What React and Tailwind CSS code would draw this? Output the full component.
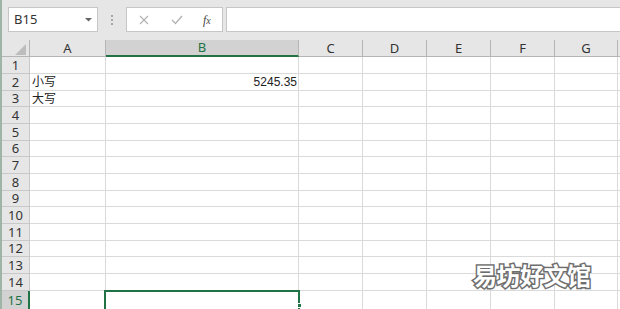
import React from "react";

const cols = [
  { n: "A", w: 76 },
  { n: "B", w: 193 },
  { n: "C", w: 64 },
  { n: "D", w: 64 },
  { n: "E", w: 64 },
  { n: "F", w: 64 },
  { n: "G", w: 63 },
];
const heights = [17, 17, 16, 17, 17, 16, 17, 17, 16, 17, 17, 16, 17, 17, 20];

export default function App() {
  return (
    <div className="w-[620px] h-[309px] overflow-hidden bg-[#e6e6e6] flex relative" style={{ fontFamily: '"Noto Sans","Noto Sans CJK SC",sans-serif' }}>
      <div className="w-[2px] shrink-0 bg-[#9fb4a6]" />
      <div className="flex-1 flex flex-col min-w-0">
        {/* toolbar */}
        <div className="h-[40px] shrink-0 flex items-start pt-[7px]">
          <div className="ml-[6px] w-[90px] h-[25px] bg-white border border-[#c6c6c6] flex items-center justify-between pl-[5px] pr-[5px]">
            <span className="text-[13px] text-[#333] leading-none">B15</span>
            <svg width="7" height="4" viewBox="0 0 7 4"><path d="M0 0H7L3.5 3.5Z" fill="#666" /></svg>
          </div>
          <div className="w-[28px] h-[25px] flex flex-col items-center justify-center gap-[2px]">
            <span className="w-[2px] h-[2px] bg-[#a8a8a8]" />
            <span className="w-[2px] h-[2px] bg-[#a8a8a8]" />
            <span className="w-[2px] h-[2px] bg-[#a8a8a8]" />
          </div>
          <div className="w-[97px] h-[25px] bg-white border border-[#c6c6c6] flex items-center">
            <svg className="ml-[12px]" width="10" height="10" viewBox="0 0 10 10"><path d="M1 1L9 9M9 1L1 9" stroke="#b3b3b3" strokeWidth="1.2" /></svg>
            <svg className="ml-[22px]" width="12" height="10" viewBox="0 0 12 10"><path d="M1 5L4.5 8.5L11 1" stroke="#b3b3b3" strokeWidth="1.4" fill="none" /></svg>
            <span className="ml-[20px] text-[12px] italic text-[#444] leading-none" style={{ fontFamily: '"Liberation Serif",serif' }}>f<span className="text-[10px]">x</span></span>
          </div>
          <div className="ml-[3px] flex-1 h-[25px] bg-white border border-[#c6c6c6] border-r-0" />
        </div>
        {/* column header */}
        <div className="h-[17px] shrink-0 flex text-[13px] text-[#333] leading-none">
          <div className="w-[28px] shrink-0 border-r border-b border-[#b5b5b5] relative">
            <svg className="absolute left-[13px] top-[4px]" width="11" height="11" viewBox="0 0 11 11"><path d="M11 0V11H0Z" fill="#bdbdbd" /></svg>
          </div>
          {cols.map((c) => (
            <div
              key={c.n}
              style={{ width: c.w }}
              className={
                c.n === "B"
                  ? "shrink-0 flex items-center justify-center border-r border-[#b5b5b5] border-b-2 border-b-[#217346] bg-[#d2d2d2] text-[#217346]"
                  : "shrink-0 flex items-center justify-center border-r border-b border-[#b5b5b5]"
              }
            >
              {c.n}
            </div>
          ))}
          <div className="flex-1 border-b border-[#b5b5b5]" />
        </div>
        {/* rows */}
        {heights.map((h, i) => {
          const r = i + 1;
          const sel = r === 15;
          return (
            <div key={r} style={{ height: h }} className="shrink-0 flex relative">
              <div
                className={
                  sel
                    ? "w-[28px] shrink-0 flex items-center justify-center text-[13px] leading-none bg-[#d2d2d2] text-[#217346] border-r-2 border-r-[#217346] border-b border-b-[#c8c8c8]"
                    : "w-[28px] shrink-0 flex items-center justify-center text-[13px] leading-none text-[#333] border-r border-b border-[#c8c8c8]"
                }
              >
                {r}
              </div>
              {cols.map((c) => (
                <div
                  key={c.n}
                  style={{ width: c.w }}
                  className="shrink-0 bg-white border-r border-b border-[#dadada] flex items-center text-[12px] text-[#222] leading-none"
                >
                  {c.n === "A" && r === 2 && <span className="pl-[2px]">小写</span>}
                  {c.n === "A" && r === 3 && <span className="pl-[2px]">大写</span>}
                  {c.n === "B" && r === 2 && <span className="ml-auto pr-[1px]" style={{ fontFamily: '"Liberation Sans",sans-serif' }}>5245.35</span>}
                </div>
              ))}
              <div className="flex-1 bg-white border-b border-[#dadada]" />
              {sel && (
                <div className="absolute left-[102px] top-[-1px] w-[196px] h-[21px] border-2 border-[#217346]">
                  <div className="absolute right-[-4px] bottom-[1px] w-[5px] h-[5px] bg-[#217346] border border-white" />
                </div>
              )}
            </div>
          );
        })}
      </div>
      <div
        className="absolute left-[473px] top-[263px] text-[24px] font-bold text-white leading-none tracking-[-0.5px] [-webkit-text-stroke:3px_#6e6e6e] [paint-order:stroke_fill]"
        style={{ fontFamily: '"Noto Sans CJK SC",sans-serif' }}
      >
        易坊好文馆
      </div>
    </div>
  );
}
